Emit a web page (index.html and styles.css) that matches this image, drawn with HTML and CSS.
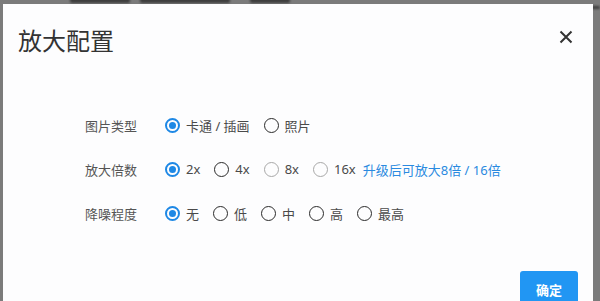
FILE: index.html
```html
<!DOCTYPE html>
<html lang="zh">
<head>
<meta charset="utf-8">
<title>放大配置</title>
<link rel="stylesheet" href="styles.css">
</head>
<body>
<div class="backdrop-blur" aria-hidden="true">
  <span class="blob b1"></span><span class="blob b2"></span><span class="blob b3"></span><span class="blob b4"></span>
</div>
<div class="modal">
  <div class="modal-header">
    <h1 class="modal-title">放大配置</h1>
    <button class="close-btn" aria-label="关闭">
      <svg width="14" height="14" viewBox="0 0 14 14"><path d="M1.5 1.5 L12.5 12.5 M12.5 1.5 L1.5 12.5" stroke="#333" stroke-width="2" fill="none"/></svg>
    </button>
  </div>
  <div class="modal-body">
    <div class="form-row">
      <span class="form-label">图片类型</span>
      <div class="options">
        <label class="option"><span class="radio checked"></span><span class="opt-text">卡通 / 插画</span></label>
        <label class="option"><span class="radio"></span><span class="opt-text">照片</span></label>
      </div>
    </div>
    <div class="form-row">
      <span class="form-label">放大倍数</span>
      <div class="options">
        <label class="option"><span class="radio checked"></span><span class="opt-text">2x</span></label>
        <label class="option"><span class="radio"></span><span class="opt-text">4x</span></label>
        <label class="option"><span class="radio disabled"></span><span class="opt-text">8x</span></label>
        <label class="option tight"><span class="radio disabled"></span><span class="opt-text">16x</span></label>
        <a class="upgrade-link" href="#">升级后可放大8倍 / 16倍</a>
      </div>
    </div>
    <div class="form-row">
      <span class="form-label">降噪程度</span>
      <div class="options">
        <label class="option"><span class="radio checked"></span><span class="opt-text">无</span></label>
        <label class="option"><span class="radio"></span><span class="opt-text">低</span></label>
        <label class="option"><span class="radio"></span><span class="opt-text">中</span></label>
        <label class="option"><span class="radio"></span><span class="opt-text">高</span></label>
        <label class="option"><span class="radio"></span><span class="opt-text">最高</span></label>
      </div>
    </div>
  </div>
  <div class="modal-footer">
    <button class="btn-primary">确定</button>
  </div>
</div>
</body>
</html>
```

FILE: styles.css
```css
html, body {
  margin: 0;
  padding: 0;
  height: 100%;
  overflow: hidden;
}
body {
  background: #7b7b7b;
  font-family: "Noto Sans", "Noto Sans CJK SC", sans-serif;
  position: relative;
  padding-top: 4px;
  box-sizing: border-box;
}
.backdrop-blur {
  position: absolute;
  top: 0;
  left: 0;
  width: 600px;
  height: 4px;
  filter: blur(1px);
}
.blob {
  position: absolute;
  top: -3px;
  height: 6px;
  background: #3e3e3e;
  border-radius: 2px;
}
.b1 { left: 70px; width: 60px; }
.b2 { left: 140px; width: 90px; }
.b3 { left: 250px; width: 40px; }
.b4 { left: 585px; width: 15px; top: 6px; height: 3px; }
.modal {
  position: relative;
  margin-left: 3px;
  width: 590px;
  height: 320px;
  background: #fdfdfe;
  display: flex;
  flex-direction: column;
}
.modal-header {
  display: flex;
  align-items: center;
  justify-content: space-between;
  padding: 20px 20px 0 15px;
}
.modal-title {
  margin: 0;
  font-size: 24px;
  line-height: 32px;
  font-weight: 400;
  color: #333;
  font-family: "Noto Sans CJK SC", sans-serif;
}
.close-btn {
  border: 0;
  background: none;
  padding: 0;
  width: 14px;
  height: 14px;
  margin-top: -6px;
  display: flex;
}
.modal-body {
  padding: 57px 0 0 82px;
  display: flex;
  flex-direction: column;
  gap: 20px;
}
.form-row {
  display: flex;
  align-items: center;
  height: 24px;
}
.form-label {
  width: 80px;
  font-size: 13px;
  color: #555;
  font-family: "Noto Sans CJK SC", sans-serif;
}
.options {
  display: flex;
  align-items: center;
}
.option {
  display: flex;
  align-items: center;
  margin-right: 14px;
}
.option.tight {
  margin-right: 7px;
}
.radio {
  box-sizing: border-box;
  width: 15px;
  height: 15px;
  border-radius: 50%;
  border: 1.5px solid #2a2a2a;
  display: flex;
  align-items: center;
  justify-content: center;
}
.radio.checked {
  border: 2px solid #1e88e5;
}
.radio.checked::after {
  content: "";
  width: 7px;
  height: 7px;
  border-radius: 50%;
  background: #1e88e5;
}
.radio.disabled {
  border: 1px solid #a8a8a8;
}
.opt-text {
  margin-left: 6px;
  font-size: 13px;
  color: #4a4a4a;
  font-family: "Noto Sans", "Noto Sans CJK SC", sans-serif;
}
.upgrade-link {
  font-size: 13px;
  color: #2a8ae0;
  text-decoration: none;
  font-family: "Noto Sans", "Noto Sans CJK SC", sans-serif;
}
.modal-footer {
  display: flex;
  justify-content: flex-end;
  padding: 46px 15px 0 0;
}
.btn-primary {
  width: 58px;
  height: 36px;
  border: 0;
  border-radius: 3px;
  background: #2196f3;
  color: #fff;
  font-size: 13px;
  font-weight: 700;
  font-family: "Noto Sans CJK SC", sans-serif;
  padding: 0;
}
```
